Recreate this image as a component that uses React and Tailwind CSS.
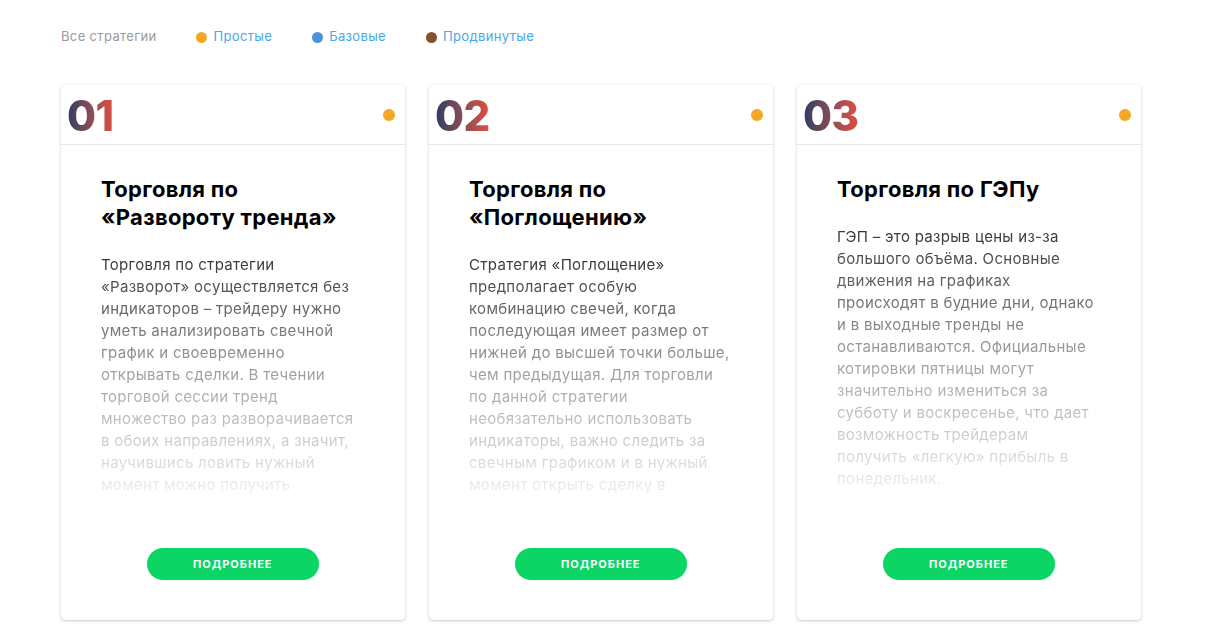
import React from "react";

const filters = [
  { label: "Простые", color: "bg-[#f5a623]" },
  { label: "Базовые", color: "bg-[#4a94dc]" },
  { label: "Продвинутые", color: "bg-[#85502a]" },
];

const strategies = [
  {
    num: "01",
    title: "Торговля по «Развороту тренда»",
    lines: [
      "Торговля по стратегии",
      "«Разворот» осуществляется без",
      "индикаторов – трейдеру нужно",
      "уметь анализировать свечной",
      "график и своевременно",
      "открывать сделки. В течении",
      "торговой сессии тренд",
      "множество раз разворачивается",
      "в обоих направлениях, а значит,",
      "научившись ловить нужный",
      "момент можно получить",
    ],
  },
  {
    num: "02",
    title: "Торговля по «Поглощению»",
    lines: [
      "Стратегия «Поглощение»",
      "предполагает особую",
      "комбинацию свечей, когда",
      "последующая имеет размер от",
      "нижней до высшей точки больше,",
      "чем предыдущая. Для торговли",
      "по данной стратегии",
      "необязательно использовать",
      "индикаторы, важно следить за",
      "свечным графиком и в нужный",
      "момент открыть сделку в",
    ],
  },
  {
    num: "03",
    title: "Торговля по ГЭПу",
    lines: [
      "ГЭП – это разрыв цены из-за",
      "большого объёма. Основные",
      "движения на графиках",
      "происходят в будние дни, однако",
      "и в выходные тренды не",
      "останавливаются. Официальные",
      "котировки пятницы могут",
      "значительно измениться за",
      "субботу и воскресенье, что дает",
      "возможность трейдерам",
      "получить «легкую» прибыль в",
      "понедельник.",
    ],
  },
];

function Card({ s }) {
  return (
    <div className="w-[343.5px] h-[535px] flex flex-col bg-white rounded-[4px] shadow-[0_1px_3px_rgba(0,0,0,0.22)]">
      <div className="h-[60px] flex items-center justify-between pl-[6px] pr-[10px] border-b border-[#e6e6e6]">
        <span className="text-[42px] leading-none font-extrabold tracking-[-0.5px] bg-gradient-to-r from-[#2c3b62] to-[#e34c3a] bg-clip-text text-transparent font-['Inter',sans-serif] pt-[2px] w-fit">
          {s.num}
        </span>
        <span className="w-3 h-3 rounded-full bg-[#f5a623]" />
      </div>
      <div className="flex-1 min-h-0 flex flex-col pl-10 pr-4 pt-[30px]">
        <h3 className="text-[22px] leading-[28px] font-bold text-black font-['Inter',sans-serif] tracking-[0.3px] pr-6">
          {s.title}
        </h3>
        <div className="flex-1 min-h-0 overflow-hidden mt-[23px] [mask-image:linear-gradient(to_bottom,black_0%,rgba(0,0,0,0.5)_45%,rgba(0,0,0,0.06)_100%)]">
          <p className="text-[15px] leading-[22px] text-[#333] font-['Inter',sans-serif] tracking-[0.3px]">
            {s.lines.map((l, i) => (
              <span key={i} className="block whitespace-nowrap">
                {l}
              </span>
            ))}
          </p>
        </div>
      </div>
      <div className="pt-12 pb-10 flex justify-center">
        <button className="w-[172px] h-8 rounded-full bg-[#0bd564] text-white text-[11px] font-bold tracking-[1px] font-['Inter',sans-serif]">
          ПОДРОБНЕЕ
        </button>
      </div>
    </div>
  );
}

export default function App() {
  return (
    <div className="min-h-screen bg-white pl-[61px] pt-[27px] font-['Inter',sans-serif]">
      <div className="flex items-center h-5 text-[13px] tracking-[0.35px]">
        <span className="text-[#9a9a9a] mr-10">Все стратегии</span>
        {filters.map((f) => (
          <div key={f.label} className="flex items-center mr-10">
            <span className={`w-[11px] h-[11px] rounded-full ${f.color} mr-[6px]`} />
            <span className="text-[#45a9ec]">{f.label}</span>
          </div>
        ))}
      </div>
      <div className="flex gap-[24.5px] mt-[38px]">
        {strategies.map((s) => (
          <Card key={s.num} s={s} />
        ))}
      </div>
    </div>
  );
}
